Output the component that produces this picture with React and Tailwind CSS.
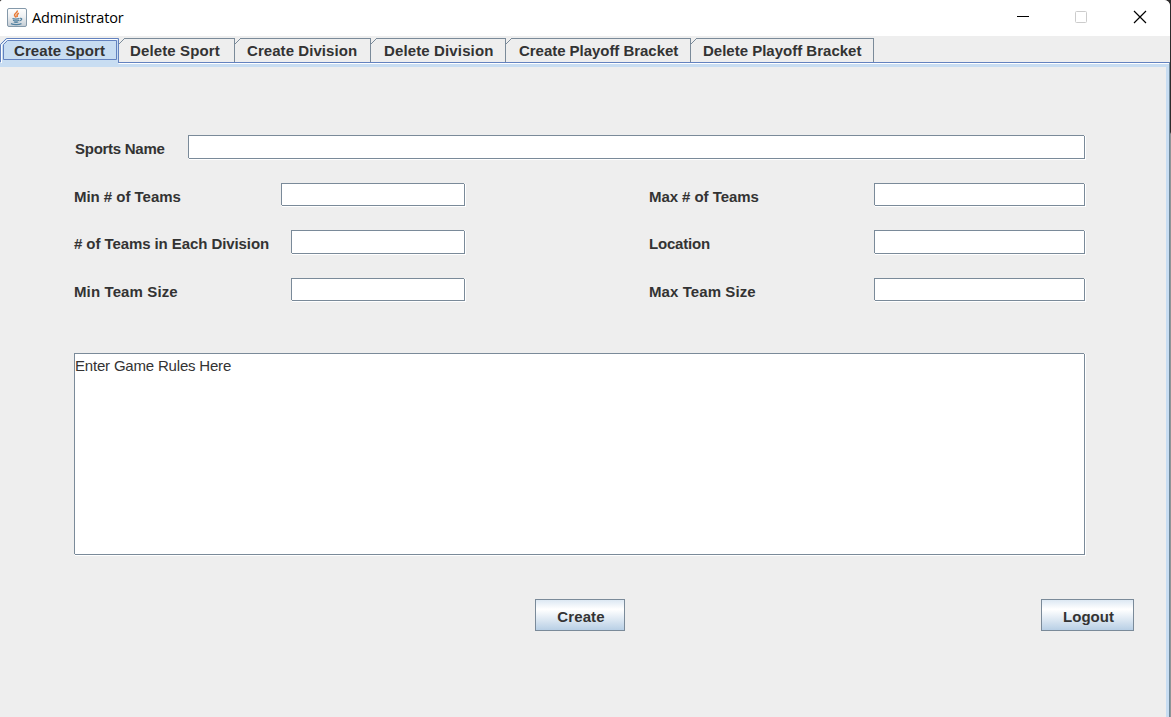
import React from "react";

const tabs = [
  { label: "Delete Sport", w: "w-[116px] pl-[11px] tracking-[0.13px]" },
  { label: "Create Division", w: "w-[136px] pl-3 tracking-[0.06px]" },
  { label: "Delete Division", w: "w-[135px] pl-[13px] tracking-[0.13px]" },
  { label: "Create Playoff Bracket", w: "w-[185px] pl-[13px] tracking-[-0.04px]" },
  { label: "Delete Playoff Bracket", w: "w-[183px] pl-3" },
];

function JavaIcon() {
  return (
    <svg width="20" height="20" viewBox="0 0 20 20" fill="none">
      <defs>
        <linearGradient id="cup" x1="0" y1="0" x2="0" y2="1">
          <stop offset="0" stopColor="#ffffff" />
          <stop offset="0.45" stopColor="#eef0f2" />
          <stop offset="1" stopColor="#c3ccd4" />
        </linearGradient>
      </defs>
      <rect x="0.5" y="0.5" width="19" height="18" rx="1.5" fill="url(#cup)" stroke="#8499aa" />
      <path d="M10.200 2.500c1 2-3 2.800-2.700 4.700.2 1 1.300 1.300 1.500 2.300M11.800 5.200c-1.800 1-2.400 1.800-1.400 3.800" stroke="#e87a35" strokeWidth="1.500" />
      <path d="M5.500 10.500c1.500.8 5.500.7 7 0M6 12.300c1.600.6 4.500.6 6 0M6.800 14c1.400.5 3 .5 4.500 0M4 15.600c2.500 1.300 8 1.200 10.500 0M13 10.300c2.400-.4 2.400 1.800-.5 2.700" stroke="#5382a1" strokeWidth="1.200" />
    </svg>
  );
}

function Label({ children, w }) {
  return (
    <span className={`block shrink-0 translate-y-0.5 whitespace-nowrap text-[15px] leading-6 font-bold ${w}`}>{children}</span>
  );
}

function Bevel({ className, children }) {
  return (
    <div className={`relative shrink-0 border border-[#7a8a99] bg-white shadow-[1px_1px_0_#fff] ${className}`}>
      <i className="absolute -top-px -right-px h-px w-px bg-[#eee]" />
      <i className="absolute -bottom-px -left-px h-px w-px bg-[#eee]" />
      {children}
    </div>
  );
}

function Button({ children, w }) {
  return (
    <button className={`h-8 border border-[#7a8a99] bg-[linear-gradient(#dde8f3_0%,#ffffff_30%,#ffffff_32%,#b8cfe5_100%)] pt-[3px] pl-[2px] text-[15px] leading-6 font-bold ${w}`}>
      {children}
    </button>
  );
}

export default function App() {
  return (
    <div className="flex h-[717px] w-[1171px] overflow-hidden bg-[linear-gradient(#2d2b2b_132px,#8f9496_134px)] font-['Liberation_Sans',sans-serif] text-[#333]">
      <div className="flex w-[1170px] flex-col overflow-hidden rounded-tl-[3px] rounded-tr-[6px] bg-[#eee]">
        <header className="flex h-9 shrink-0 items-center bg-white pl-[7px]">
          <JavaIcon />
          <span className="ml-[5px] flex-1 font-['Open_Sans','Noto_Sans',sans-serif] text-[14.500px] tracking-[-0.16px] text-black">Administrator</span>
          <svg width="160" height="36" fill="none" stroke="#000">
            <path d="M7 16.500h12" />
            <rect x="65.500" y="11.500" width="11" height="11" rx="1" stroke="#ccc" />
            <path d="M124 11l12 12M136 11l-12 12" strokeWidth="1.200" />
          </svg>
        </header>

        <nav className="flex h-[26px] shrink-0 items-end">
          <div className="relative z-10 -mb-[2px] flex h-[26px] w-[119px]">
            <svg width="119" height="26" fill="none" className="absolute">
              <path d="M0 6L6 0H118.500V26H0z" fill="#c8ddf2" />
              <path d="M.5 24V6.500L6.500.5H118.500V25" stroke="#6382bf" />
              <path d="M1.500 25V7L7 1.500H117.500" stroke="#fff" />
              <path d="M3.500 21.500V6.500L7.500 2.500H116.500V21.500z" stroke="#6382bf" />
            </svg>
            <span className="relative w-[118px] pl-px text-center text-[15px] leading-[25px] font-bold tracking-[0.08px]">Create Sport</span>
          </div>
          {tabs.map((t) => (
            <div key={t.label} className={`relative h-6 border-t border-r border-[#7a8a99] ${t.w}`}>
              <svg width="7" height="7" className="absolute -top-px left-0" fill="none">
                <path d="M0 0H6L0 6z" fill="#eee" />
                <path d="M0 6L6 0" stroke="#7a8a99" />
              </svg>
              <span className="block whitespace-nowrap text-[15px] leading-6 font-bold">{t.label}</span>
            </div>
          ))}
        </nav>

        <main className="flex flex-1 flex-col border-t border-r border-t-[#6382bf] border-r-[#6e8798]">
          <div className="flex-1 border-t border-white">
            <div className="flex h-full flex-col border-t-[3px] border-r-[3px] border-[#c8ddf2] pt-[68px] pl-[74px]">
              <div className="flex h-12 items-start">
                <Label w="w-[114px] pl-px tracking-[-0.27px]">Sports Name</Label>
                <Bevel className="h-6 w-[897px]" />
              </div>
              <div className="flex h-[47px] items-start">
                <Label w="w-[207px] tracking-[-0.03px]">Min # of Teams</Label>
                <Bevel className="h-[23px] w-[184px]" />
                <div className="w-[184px]" />
                <Label w="w-[225px] tracking-[-0.06px]">Max # of Teams</Label>
                <Bevel className="h-[23px] w-[211px]" />
              </div>
              <div className="flex h-12 items-start">
                <Label w="w-[217px] tracking-[-0.08px]"># of Teams in Each Division</Label>
                <Bevel className="h-6 w-[174px]" />
                <div className="w-[184px]" />
                <Label w="w-[225px] tracking-[-0.2px]">Location</Label>
                <Bevel className="h-6 w-[211px]" />
              </div>
              <div className="flex h-[75px] items-start">
                <Label w="w-[217px] tracking-[0.12px]">Min Team Size</Label>
                <Bevel className="h-[23px] w-[174px]" />
                <div className="w-[184px]" />
                <Label w="w-[225px] tracking-[0.08px]">Max Team Size</Label>
                <Bevel className="h-[23px] w-[211px]" />
              </div>
              <Bevel className="h-[202px] w-[1011px] pt-px text-[15px] leading-[22px] tracking-[-0.19px]">
                Enter Game Rules Here
              </Bevel>
              <div className="mt-11 flex pl-[461px]">
                <Button w="w-[90px] tracking-[0.1px]">Create</Button>
                <div className="w-[416px]" />
                <Button w="w-[93px]">Logout</Button>
              </div>
            </div>
          </div>
        </main>
      </div>
    </div>
  );
}
